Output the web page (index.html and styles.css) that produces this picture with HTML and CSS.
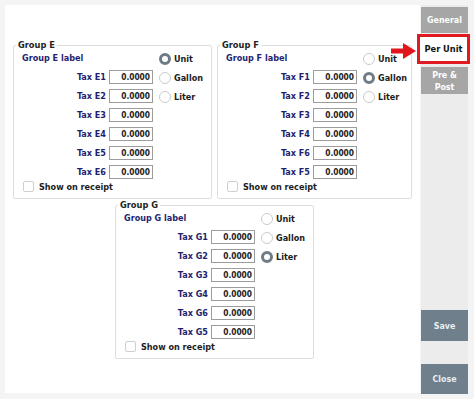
FILE: index.html
```html
<!DOCTYPE html>
<html>
<head>
<meta charset="utf-8">
<link rel="stylesheet" href="styles.css">
</head>
<body>
<div class="app">
  <div class="main">
    <div class="row-top">
      <fieldset class="group g-e">
        <legend>Group E</legend>
        <div class="gbody">
          <div class="fields">
            <div class="glabel">Group E label</div>
            <div class="tax"><span>Tax E1</span><div class="inp">0.0000</div></div>
            <div class="tax"><span>Tax E2</span><div class="inp">0.0000</div></div>
            <div class="tax"><span>Tax E3</span><div class="inp">0.0000</div></div>
            <div class="tax"><span>Tax E4</span><div class="inp">0.0000</div></div>
            <div class="tax"><span>Tax E5</span><div class="inp">0.0000</div></div>
            <div class="tax"><span>Tax E6</span><div class="inp">0.0000</div></div>
            <div class="chk"><span class="box"></span>Show on receipt</div>
          </div>
          <div class="radios">
            <div class="radio on"><span class="dot"></span>Unit</div>
            <div class="radio"><span class="dot"></span>Gallon</div>
            <div class="radio"><span class="dot"></span>Liter</div>
          </div>
        </div>
      </fieldset>
      <fieldset class="group g-f">
        <legend>Group F</legend>
        <div class="gbody">
          <div class="fields">
            <div class="glabel">Group F label</div>
            <div class="tax"><span>Tax F1</span><div class="inp">0.0000</div></div>
            <div class="tax"><span>Tax F2</span><div class="inp">0.0000</div></div>
            <div class="tax"><span>Tax F3</span><div class="inp">0.0000</div></div>
            <div class="tax"><span>Tax F4</span><div class="inp">0.0000</div></div>
            <div class="tax"><span>Tax F6</span><div class="inp">0.0000</div></div>
            <div class="tax"><span>Tax F5</span><div class="inp">0.0000</div></div>
            <div class="chk"><span class="box"></span>Show on receipt</div>
          </div>
          <div class="radios">
            <div class="radio"><span class="dot"></span>Unit</div>
            <div class="radio on"><span class="dot"></span>Gallon</div>
            <div class="radio"><span class="dot"></span>Liter</div>
          </div>
        </div>
      </fieldset>
    </div>
    <div class="row-bottom">
      <fieldset class="group g-g">
        <legend>Group G</legend>
        <div class="gbody">
          <div class="fields">
            <div class="glabel">Group G label</div>
            <div class="tax"><span>Tax G1</span><div class="inp">0.0000</div></div>
            <div class="tax"><span>Tax G2</span><div class="inp">0.0000</div></div>
            <div class="tax"><span>Tax G3</span><div class="inp">0.0000</div></div>
            <div class="tax"><span>Tax G4</span><div class="inp">0.0000</div></div>
            <div class="tax"><span>Tax G6</span><div class="inp">0.0000</div></div>
            <div class="tax"><span>Tax G5</span><div class="inp">0.0000</div></div>
            <div class="chk"><span class="box"></span>Show on receipt</div>
          </div>
          <div class="radios">
            <div class="radio"><span class="dot"></span>Unit</div>
            <div class="radio"><span class="dot"></span>Gallon</div>
            <div class="radio on"><span class="dot"></span>Liter</div>
          </div>
        </div>
      </fieldset>
    </div>
  </div>
  <div class="sidebar">
    <div class="btn general">General</div>
    <div class="btn perunit">Per Unit</div>
    <div class="btn prepost">Pre &amp;<br>Post</div>
    <div class="spacer"></div>
    <div class="btn save">Save</div>
    <div class="btn close">Close</div>
  </div>
  <svg class="arrow" width="26" height="18" viewBox="0 0 26 18">
    <rect x="0" y="6.5" width="13" height="5" fill="#e3151c"/>
    <polygon points="12,1 25,9 12,17" fill="#e3151c"/>
  </svg>
</div>
</body>
</html>
```

FILE: styles.css
```css
html, body {
  margin: 0;
  padding: 0;
}
body {
  background: #f4f4f4;
  font-family: "DejaVu Sans Condensed", "DejaVu Sans", Verdana, sans-serif;
  font-stretch: semi-condensed;
  font-weight: bold;
  font-size: 9px;
  color: #1c1c1c;
}
.app {
  position: relative;
  display: flex;
  align-items: flex-start;
  padding: 5px 0 0 5px;
  height: 399px;
  box-sizing: border-box;
}
.main {
  width: 415px;
  height: 388px;
  background: #fff;
  padding: 35px 0 0 8px;
  box-sizing: border-box;
}
.row-top {
  display: flex;
  gap: 5px;
}
.row-bottom {
  margin-top: 1px;
  padding-left: 102px;
}
.group {
  margin: 0;
  padding: 0 0 6px 0;
  border: 1px solid #dedede;
  border-radius: 2px;
  box-sizing: border-box;
  min-width: 0;
}
.g-e, .g-g { width: 199px; }
.g-f { width: 195px; }
legend {
  margin-left: 2px;
  padding: 0 2px;
  line-height: 10px;
  font-size: 9.2px;
  color: #222;
}
.gbody {
  display: flex;
  padding-left: 8px;
}
.fields {
  width: 131px;
}
.glabel {
  height: 17px;
  line-height: 17px;
  color: #1f1f6f;
  white-space: nowrap;
}
.tax {
  height: 19px;
  display: flex;
  justify-content: flex-end;
  align-items: center;
  gap: 3px;
  color: #1f1f6f;
}
.inp {
  width: 44px;
  height: 14px;
  box-sizing: border-box;
  border: 1px solid #9c9c9c;
  font-size: 8.3px;
  line-height: 12px;
  text-align: right;
  padding-right: 2px;
  color: #222;
  background: #fff;
}
.chk {
  display: flex;
  align-items: center;
  gap: 5px;
  height: 11px;
  margin-left: 1px;
  white-space: nowrap;
  color: #1c1c1c;
}
.box {
  width: 11px;
  height: 11px;
  box-sizing: border-box;
  border: 1px solid #cfcfcf;
  border-radius: 2px;
  background: #fff;
}
.radios {
  margin-left: 6px;
  margin-top: -1px;
}
.radio {
  height: 19px;
  display: flex;
  align-items: center;
  gap: 3px;
  white-space: nowrap;
  color: #1c1c1c;
}
.dot {
  width: 12px;
  height: 12px;
  box-sizing: border-box;
  border-radius: 50%;
  border: 1px solid #cbcbcb;
  background: #fff;
}
.radio.on .dot {
  border: 3.5px solid #6f7b85;
}
.sidebar {
  width: 47px;
  margin-left: 1px;
  height: 389px;
  background: #ececec;
  display: flex;
  flex-direction: column;
  padding-top: 2px;
  box-sizing: border-box;
}
.btn {
  display: flex;
  align-items: center;
  justify-content: center;
  text-align: center;
  font-size: 8.8px;
  line-height: 12px;
  color: #fff;
  background: #a6a6a6;
  box-sizing: border-box;
}
.general {
  height: 26px;
}
.perunit {
  height: 30px;
  margin: 1px -2px 0 -4px;
  border: 3px solid #e01a22;
  background: #fff;
  color: #111;
  font-size: 9.2px;
}
.prepost {
  height: 27px;
  margin-top: 3px;
}
.spacer {
  flex: 1;
}
.save {
  height: 31px;
  background: #6f7f8b;
  color: #e8eef2;
}
.close {
  height: 30px;
  margin-top: 23px;
  background: #6f7f8b;
  color: #e8eef2;
}
.arrow {
  position: absolute;
  left: 391px;
  top: 42px;
}
```
